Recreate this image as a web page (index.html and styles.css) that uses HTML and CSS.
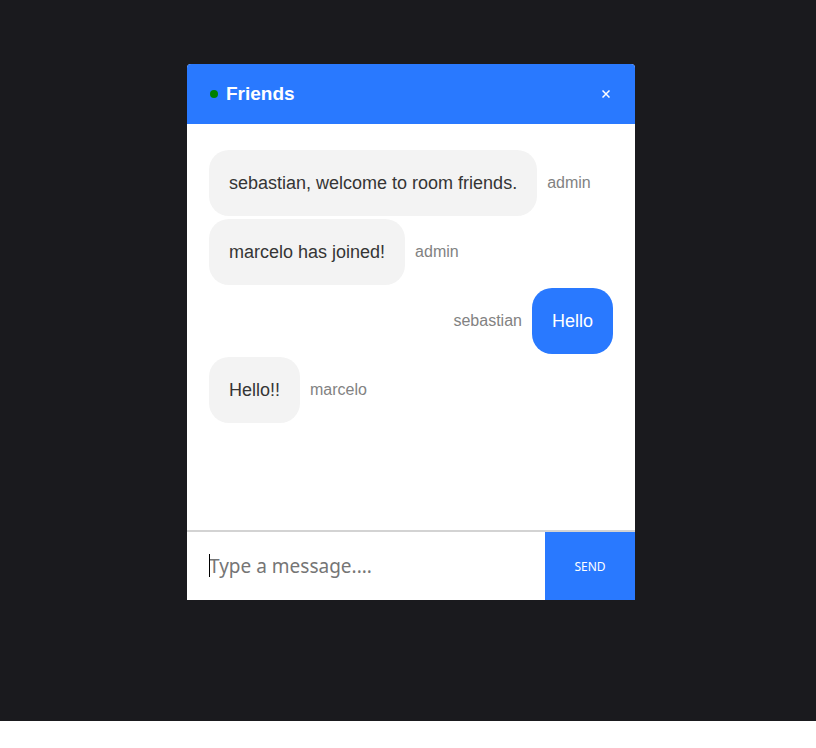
FILE: index.html
```html
<!DOCTYPE html>
<html lang="en">
<head>
<meta charset="utf-8">
<title>Friends</title>
<link rel="stylesheet" href="styles.css">
</head>
<body>
<main class="page">
  <section class="chat">
    <header class="bar">
      <span class="online"></span>
      <h1 class="room">Friends</h1>
      <a class="close" href="#" aria-label="Close">
        <svg width="8" height="8" viewBox="0 0 8 8" fill="none" stroke="currentColor" stroke-width="1.5"><path d="M.5.5l7 7M7.5.5l-7 7"/></svg>
      </a>
    </header>
    <div class="messages">
      <div class="message"><p class="bubble">sebastian, welcome to room friends.</p><span class="sender">admin</span></div>
      <div class="message"><p class="bubble">marcelo has joined!</p><span class="sender">admin</span></div>
      <div class="message own"><p class="bubble">Hello</p><span class="sender">sebastian</span></div>
      <div class="message"><p class="bubble">Hello!!</p><span class="sender">marcelo</span></div>
    </div>
    <form class="composer">
      <label class="field"><input class="input" type="text" placeholder="Type a message...." aria-label="Message"></label>
      <button class="send" type="button">SEND</button>
    </form>
  </section>
</main>
</body>
</html>
```
FILE: styles.css
```css
* { box-sizing: border-box; }
body {
  margin: 0;
  background: #fff;
  font-family: "Liberation Sans", Arial, sans-serif;
}
.page {
  display: flex;
  justify-content: center;
  padding: 64px 0 121px 6px;
  background: #1a1a1e;
}
.chat {
  display: flex;
  flex-direction: column;
  width: 55%;
  min-width: 448px;
  background: #fff;
  border-radius: 4px 4px 0 0;
}
.bar {
  display: flex;
  align-items: center;
  height: 60px;
  padding: 0 25px 0 23px;
  background: #2979ff;
  color: #fff;
  border-radius: 4px 4px 0 0;
}
.online {
  width: 8px;
  height: 8px;
  margin-right: 8px;
  border-radius: 50%;
  background: green;
}
.room {
  margin: 0;
  font-size: 19px;
  line-height: 24px;
}
.close {
  display: flex;
  margin-left: auto;
  color: #fff;
}
.messages {
  display: flex;
  flex-direction: column;
  gap: 3px;
  min-height: 406px;
  padding: 26px 22px;
}
.message {
  display: flex;
  align-items: center;
  gap: 10px;
}
.own { flex-direction: row-reverse; }
.bubble {
  margin: 0;
  padding: 21px 20px;
  border-radius: 20px;
  background: #f3f3f3;
  color: #353535;
  font-size: 18px;
  line-height: 24px;
}
.own .bubble {
  background: #2979ff;
  color: #fff;
}
.sender {
  color: #828282;
  font-size: 16px;
  line-height: 24px;
}
.composer {
  display: flex;
  height: 70px;
  border-top: 2px solid #d3d3d3;
}
.field {
  position: relative;
  display: flex;
  flex: 1;
}
.field::before {
  content: "";
  position: absolute;
  left: 22px;
  top: 22px;
  width: 1px;
  height: 23px;
  background: #000;
}
.input {
  flex: 1;
  min-width: 0;
  padding: 0 22px;
  border: 0;
  outline: 0;
  background: transparent;
  font-family: "Noto Sans", Tahoma, sans-serif;
  font-size: 19px;
}
.input::placeholder { color: #757575; }
.send {
  width: 90px;
  padding: 0;
  border: 0;
  background: #2979ff;
  color: #fff;
  font-family: "Noto Sans", Tahoma, sans-serif;
  font-size: 12px;
}
```
